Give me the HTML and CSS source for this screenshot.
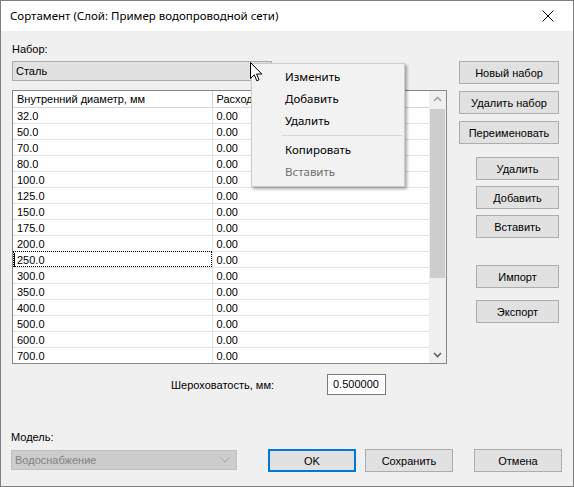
FILE: index.html
```html
<!DOCTYPE html>
<html lang="ru">
<head>
    <meta charset="UTF-8">
    <title>Сортамент</title>
    <link rel="stylesheet" href="styles.css">
</head>
<body>
<div class="window">
    <div class="titlebar">
        <span class="title">Сортамент (Слой: Пример водопроводной сети)</span>
        <svg class="close" width="12" height="12" viewBox="0 0 12 12">
            <path d="M0.5 0.5 L11.5 11.5 M11.5 0.5 L0.5 11.5" stroke="#000" stroke-width="1"/>
        </svg>
    </div>

    <div class="main">
        <div class="left">
            <div class="label">Набор:</div>
            <div class="combo">Сталь</div>

            <div class="grid">
                <div class="grid-body">
                    <table>
                        <tr class="head"><td class="c1">Внутренний диаметр, мм</td><td class="c2">Расход</td></tr>
                        <tr><td class="c1">32.0</td><td>0.00</td></tr>
                        <tr><td class="c1">50.0</td><td>0.00</td></tr>
                        <tr><td class="c1">70.0</td><td>0.00</td></tr>
                        <tr><td class="c1">80.0</td><td>0.00</td></tr>
                        <tr><td class="c1">100.0</td><td>0.00</td></tr>
                        <tr><td class="c1">125.0</td><td>0.00</td></tr>
                        <tr><td class="c1">150.0</td><td>0.00</td></tr>
                        <tr><td class="c1">175.0</td><td>0.00</td></tr>
                        <tr><td class="c1">200.0</td><td>0.00</td></tr>
                        <tr><td class="c1 focus">250.0<span class="ibeam"></span></td><td>0.00</td></tr>
                        <tr><td class="c1">300.0</td><td>0.00</td></tr>
                        <tr><td class="c1">350.0</td><td>0.00</td></tr>
                        <tr><td class="c1">400.0</td><td>0.00</td></tr>
                        <tr><td class="c1">500.0</td><td>0.00</td></tr>
                        <tr><td class="c1">600.0</td><td>0.00</td></tr>
                        <tr><td class="c1">700.0</td><td>0.00</td></tr>
                    </table>
                </div>
                <div class="scrollbar">
                    <svg class="arrow" width="17" height="17" viewBox="0 0 17 17">
                        <path d="M5 10 L8.5 6.5 L12 10" fill="none" stroke="#a3a3a3" stroke-width="1.6"/>
                    </svg>
                    <div class="track"><div class="thumb"></div></div>
                    <svg class="arrow" width="17" height="17" viewBox="0 0 17 17">
                        <path d="M5 7 L8.5 10.5 L12 7" fill="none" stroke="#606060" stroke-width="1.6"/>
                    </svg>
                </div>
            </div>
        </div>

        <div class="side">
            <button class="btn">Новый набор</button>
            <button class="btn">Удалить набор</button>
            <button class="btn">Переименовать</button>
            <button class="btn small first">Удалить</button>
            <button class="btn small">Добавить</button>
            <button class="btn small">Вставить</button>
            <button class="btn small import">Импорт</button>
            <button class="btn small">Экспорт</button>
        </div>
    </div>

    <div class="rough">
        <span class="rough-label">Шероховатость, мм:</span>
        <div class="input">0.500000</div>
    </div>

    <div class="bottom">
        <div class="model">
            <div class="label">Модель:</div>
            <div class="combo disabled">
                <span>Водоснабжение</span>
                <svg width="10" height="6" viewBox="0 0 10 6">
                    <path d="M0.5 0.5 L5 5 L9.5 0.5" fill="none" stroke="#a8a8a8" stroke-width="1"/>
                </svg>
            </div>
        </div>
        <button class="btn wide ok">OK</button>
        <button class="btn wide save">Сохранить</button>
        <button class="btn wide cancel">Отмена</button>
    </div>

    <div class="menu">
        <div class="item">Изменить</div>
        <div class="item">Добавить</div>
        <div class="item">Удалить</div>
        <div class="sep"></div>
        <div class="item">Копировать</div>
        <div class="item off">Вставить</div>
    </div>

    <svg class="pointer" width="13" height="21" viewBox="0 0 13 21">
        <path d="M0.5 0.5 L0.5 16.5 L4.3 12.8 L6.8 18.8 L9 17.8 L6.6 12 L11.8 12 Z" fill="#fff" stroke="#000" stroke-width="1"/>
    </svg>
</div>
</body>
</html>
```

FILE: styles.css
```css
html, body {
    margin: 0;
    padding: 0;
    background: #f0f0f0;
}

.window {
    position: relative;
    width: 574px;
    height: 487px;
    box-sizing: border-box;
    border: 1px solid #7f7f7f;
    background: #f0f0f0;
    font-family: "Liberation Sans", Arial, sans-serif;
    font-size: 11px;
    color: #000;
    overflow: hidden;
}

.titlebar {
    height: 30px;
    background: #fff;
    display: flex;
    align-items: center;
    justify-content: space-between;
    padding: 0 19px 0 9px;
}

.title {
    font-family: "Noto Sans", sans-serif;
    font-size: 11.5px;
    padding-bottom: 1px;
}

.close {
    display: block;
}

.main {
    display: flex;
    padding-left: 11px;
}

.left {
    width: 435px;
}

.label {
    margin-top: 12px;
    height: 13px;
    line-height: 13px;
}

.combo {
    margin-top: 5px;
    height: 20px;
    box-sizing: border-box;
    border: 1px solid #adadad;
    background: #e1e1e1;
    width: 260px;
    padding-left: 3px;
    line-height: 18px;
}

.grid {
    margin-top: 9px;
    height: 274px;
    box-sizing: border-box;
    border: 1px solid #828790;
    background: #fff;
    display: flex;
}

.grid-body {
    flex: 1;
    overflow: hidden;
}

table {
    border-collapse: collapse;
    width: 100%;
    font-size: 11px;
}

td {
    height: 15px;
    padding: 1px 0 0 4px;
    box-sizing: border-box;
    border-bottom: 1px solid #e3e3e3;
    line-height: 14px;
    white-space: nowrap;
}

td.c1 {
    width: 199px;
    border-right: 1px solid #e3e3e3;
}

tr.head td {
    height: 16px;
    border-bottom: 1px solid #d5d5d5;
}

tr.head td.c1 {
    border-right: 1px solid #d5d5d5;
}

td.focus {
    position: relative;
    outline: 1px dotted #000;
    outline-offset: -1px;
}

.ibeam {
    position: absolute;
    left: 1px;
    top: 1px;
    width: 3px;
    height: 14px;
    border-left: 1px solid #000;
    box-sizing: border-box;
}

.scrollbar {
    width: 17px;
    background: #f0f0f0;
    display: flex;
    flex-direction: column;
}

.arrow {
    display: block;
    flex: none;
}

.track {
    flex: 1;
}

.thumb {
    margin: 1px 1px 0 1px;
    height: 169px;
    background: #cdcdcd;
}

.side {
    margin-left: 12px;
    width: 100px;
    padding-top: 30px;
    display: flex;
    flex-direction: column;
}

.btn {
    height: 23px;
    box-sizing: border-box;
    border: 1px solid #adadad;
    background: #e1e1e1;
    font-family: "Liberation Sans", Arial, sans-serif;
    font-size: 11px;
    color: #000;
    padding: 0;
    margin: 0 0 7px 0;
}

.btn.small {
    width: 83px;
    margin-left: auto;
    margin-bottom: 6px;
}

.btn.first {
    margin-top: 6px;
}

.btn.import {
    margin-top: 21px;
    margin-bottom: 12px;
}

.rough {
    display: flex;
    align-items: center;
    margin-top: 10px;
    padding-left: 170px;
}

.rough-label {
    width: 156px;
}

.input {
    width: 59px;
    height: 21px;
    box-sizing: border-box;
    border: 1px solid #7a7a7a;
    background: #fff;
    line-height: 19px;
    padding-left: 5px;
}

.bottom {
    display: flex;
    align-items: flex-end;
    padding-left: 10px;
    margin-top: 36px;
}

.model {
    width: 226px;
}

.model .label {
    margin-top: 0;
}

.combo.disabled {
    width: 226px;
    margin-top: 6px;
    margin-bottom: 2px;
    background: #cccccc;
    border-color: #bfbfbf;
    color: #838383;
    display: flex;
    align-items: center;
    justify-content: space-between;
    padding-right: 6px;
}

.btn.wide {
    width: 88px;
    margin-bottom: 0;
}

.btn.ok {
    margin-left: 31px;
    border: 2px solid #0078d7;
}

.btn.save {
    margin-left: 9px;
}

.btn.cancel {
    margin-left: 21px;
}

.menu {
    position: absolute;
    left: 250px;
    top: 62px;
    width: 154px;
    box-sizing: border-box;
    background: #f2f2f2;
    border: 1px solid #cccccc;
    box-shadow: 2px 2px 3px rgba(0, 0, 0, 0.35);
    padding: 2px 0 3px 0;
    font-family: "Noto Sans", sans-serif;
    font-size: 11.5px;
}

.item {
    height: 22px;
    line-height: 22px;
    padding-left: 33px;
}

.item.off {
    color: #6d6d6d;
}

.sep {
    height: 7px;
    margin: 0 2px 0 29px;
    position: relative;
}

.sep::after {
    content: "";
    position: absolute;
    left: 0;
    right: 0;
    top: 3px;
    border-top: 1px solid #d7d7d7;
}

.pointer {
    position: absolute;
    left: 249px;
    top: 61px;
}
```
